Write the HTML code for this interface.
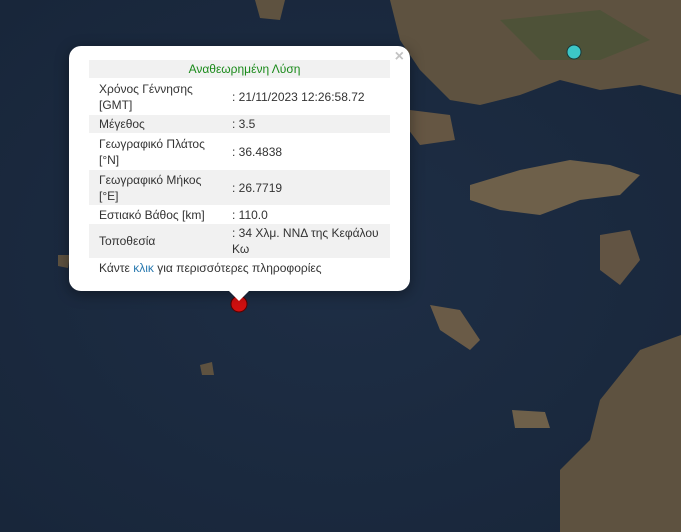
<!DOCTYPE html>
<html><head><meta charset="utf-8"><style>
body{margin:0;width:681px;height:532px;overflow:hidden;background:#1c2b40;font-family:"Liberation Sans","DejaVu Sans",sans-serif;position:relative}
svg{position:absolute;left:0;top:0}
.pop{position:absolute;left:69px;top:46px;width:341px;height:245px;background:#fff;border-radius:12px;box-shadow:0 3px 14px rgba(0,0,0,.4)}
.tip{position:absolute;left:228px;top:290px;width:0;height:0;border-left:11px solid transparent;border-right:11px solid transparent;border-top:11px solid #fff}
.x{position:absolute;right:6px;top:2px;color:#c3c3c3;font-size:16px;font-weight:bold}
table{position:absolute;left:20px;top:14px;width:301px;border-collapse:collapse;font-size:12px;color:#333;table-layout:fixed}
td{padding:0 0 0 10px;line-height:16px;vertical-align:middle;white-space:nowrap}
tr.g td{background:#f1f1f1}
.h td{text-align:center;color:#1a8a1a;height:18px}
.f{position:absolute;left:30px;top:215px;font-size:12px;color:#333}
.f span{color:#2a7ab0}
</style></head><body>
<svg width="681" height="532">
<defs><radialGradient id="sea" cx="50%" cy="50%" r="70%"><stop offset="0" stop-color="#1e2e45"/><stop offset="1" stop-color="#18263a"/></radialGradient></defs>
<rect width="681" height="532" fill="url(#sea)"/>
<path d="M390,0 L681,0 L681,95 L640,85 L600,90 L560,80 L520,95 L480,105 L450,100 L420,70 L400,40 Z" fill="#5e5240"/>
<path d="M500,20 L600,10 L650,40 L600,60 L540,60 Z" fill="#4e5238"/>
<path d="M410,110 L450,115 L455,140 L420,145 L405,125 Z" fill="#655643"/>
<path d="M470,185 L520,170 L570,160 L610,165 L640,175 L620,195 L580,200 L540,215 L500,210 L470,200 Z" fill="#6e604a"/>
<path d="M600,235 L630,230 L640,260 L620,285 L600,270 Z" fill="#625443"/>
<path d="M430,305 L460,310 L480,340 L470,350 L440,330 Z" fill="#6a5b47"/>
<path d="M681,335 L640,350 L600,400 L590,440 L560,470 L560,532 L681,532 Z" fill="#5e5240"/>
<path d="M512,410 L545,412 L550,428 L515,428 Z" fill="#6e604a"/>
<path d="M255,0 L285,0 L280,20 L260,18 Z" fill="#5e5240"/>
<path d="M200,365 L212,362 L214,375 L202,375 Z" fill="#5e5240"/>
<path d="M58,255 L70,255 L68,268 L58,266 Z" fill="#5e5240"/>
<circle cx="574" cy="52" r="7" fill="#3cc7c7" stroke="#1a3a3a" stroke-width="1"/>
<circle cx="239" cy="304" r="8" fill="#d01010" stroke="#5a0000" stroke-width="1"/>
</svg>
<div class="pop"><div class="x">×</div>
<table>
<colgroup><col style="width:133px"><col style="width:168px"></colgroup>
<tr class="h g"><td colspan="2">Αναθεωρημένη Λύση</td></tr>
<tr style="height:37px"><td>Χρόνος Γέννησης<br>[GMT]</td><td>: 21/11/2023 12:26:58.72</td></tr>
<tr class="g" style="height:18px"><td>Μέγεθος</td><td>: 3.5</td></tr>
<tr style="height:37px"><td>Γεωγραφικό Πλάτος<br>[°N]</td><td>: 36.4838</td></tr>
<tr class="g" style="height:35px"><td>Γεωγραφικό Μήκος<br>[°E]</td><td>: 26.7719</td></tr>
<tr style="height:19px"><td>Εστιακό Βάθος [km]</td><td>: 110.0</td></tr>
<tr class="g" style="height:34px"><td>Τοποθεσία</td><td>: 34 Χλμ. ΝΝΔ της Κεφάλου<br>Κω</td></tr>
</table>
<div class="f">Κάντε <span>κλικ</span> για περισσότερες πληροφορίες</div>
</div>
<div class="tip"></div>
</body></html>
